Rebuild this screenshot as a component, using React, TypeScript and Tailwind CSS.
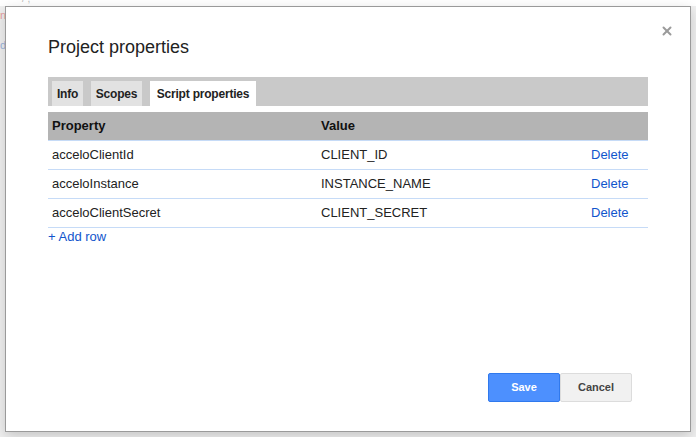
import { X } from "lucide-react";

type PropRow = {
  key: string;
  value: string;
};

const ROWS: PropRow[] = [
  { key: "acceloClientId", value: "CLIENT_ID" },
  { key: "acceloInstance", value: "INSTANCE_NAME" },
  { key: "acceloClientSecret", value: "CLIENT_SECRET" },
];

const TABS = [
  { label: "Info", width: "w-[31px]" },
  { label: "Scopes", width: "w-[51px]" },
  { label: "Script properties", width: "w-[106px]" },
];

export default function App() {
  return (
    <div
      className="relative w-[696px] h-[437px] overflow-hidden bg-[#f0f0f0] pl-[5px] pt-[6px]"
      style={{ fontFamily: '"Liberation Sans", Arial, sans-serif' }}
    >
      {/* editor bits peeking behind the dialog */}
      <div className="absolute left-0 top-0 h-[6px] w-full bg-white" />
      <span className="absolute left-[22px] top-[-7px] text-[10px] leading-[12px] text-[#bbb]">/ ,</span>
      <span className="absolute left-0 top-[9px] text-[11px] leading-[12px] text-[#e8a0a0]">n</span>
      <span className="absolute left-0 top-[39px] text-[11px] leading-[12px] text-[#9ab4dc]">d</span>

      <div className="relative flex h-[426px] w-[686px] flex-col border border-[#9a9a9a] bg-white shadow-[0_4px_12px_rgba(0,0,0,0.18)]">
        <button className="absolute right-[16px] top-[17px] text-[#9b9b9b]">
          <X size={14} strokeWidth={3.4} />
        </button>

        <div className="pl-[42px] pt-[28px]">
          <h1 className="h-[24px] text-[18px] leading-[24px] text-[#222]">Project properties</h1>
        </div>

        <div className="mx-[42px] mt-[18px]">
          <div className="flex h-[29px] gap-[8px] bg-[#c9c9c9] pl-[4px] pt-[4px]">
            {TABS.map((tab, i) => (
              <div
                key={tab.label}
                className={
                  i === TABS.length - 1
                    ? `flex h-[25px] ${tab.width} items-center justify-center whitespace-nowrap bg-white text-[12px] font-bold tracking-[-0.2px] text-[#222]`
                    : `flex h-[25px] ${tab.width} items-center justify-center whitespace-nowrap bg-[#e2e2e2] text-[12px] font-bold tracking-[-0.2px] text-[#222]`
                }
              >
                {tab.label}
              </div>
            ))}
          </div>

          <div className="mt-[6px] grid h-[29px] grid-cols-[269px_270px_1fr] items-center border-b border-[#c6dbf7] bg-[#b4b4b4] text-[13px] font-bold text-[#111]">
            <div className="pl-[4px]">Property</div>
            <div className="pl-[4px]">Value</div>
            <div />
          </div>

          {ROWS.map((row) => (
            <div
              key={row.key}
              className="grid h-[29px] grid-cols-[269px_270px_1fr] items-center border-b border-[#c6dbf7] text-[13px] text-[#222]"
            >
              <div className="pl-[4px]">{row.key}</div>
              <div className="pl-[4px]">{row.value}</div>
              <div className="pl-[4px] text-[#1155cc]">Delete</div>
            </div>
          ))}

          <div className="mt-[1px] h-[16px] text-[13px] leading-[16px] text-[#1155cc]">+ Add row</div>
        </div>

        <div className="mt-auto flex justify-end pb-[29px] pr-[58px]">
          <button className="h-[29px] w-[72px] rounded-[2px] border border-[#3079ed] bg-[#4d90fe] text-[11px] font-bold text-white">
            Save
          </button>
          <button className="h-[29px] w-[72px] rounded-[2px] border border-[#dcdcdc] bg-[#f1f1f1] text-[11px] font-bold text-[#444]">
            Cancel
          </button>
        </div>
      </div>
    </div>
  );
}
